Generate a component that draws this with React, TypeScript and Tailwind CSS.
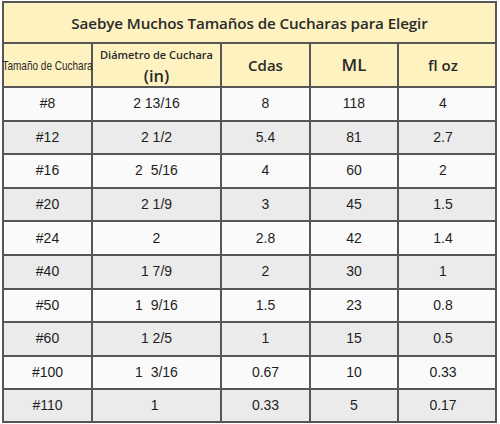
import React from 'react';

const rows: [string, string, string, string, string][] = [
    ['#8', '2 13/16', '8', '118', '4'],
    ['#12', '2 1/2', '5.4', '81', '2.7'],
    ['#16', '2\u00a0 5/16', '4', '60', '2'],
    ['#20', '2 1/9', '3', '45', '1.5'],
    ['#24', '2', '2.8', '42', '1.4'],
    ['#40', '1 7/9', '2', '30', '1'],
    ['#50', '1\u00a0 9/16', '1.5', '23', '0.8'],
    ['#60', '1 2/5', '1', '15', '0.5'],
    ['#100', '1\u00a0 3/16', '0.67', '10', '0.33'],
    ['#110', '1\u00a0', '0.33', '5', '0.17'],
];

const widths = ['w-[89px]', 'w-[129px]', 'w-[89px]', 'w-[88px]', 'w-[88px]'];
const heading = "font-['Open_Sans',sans-serif] font-semibold text-[#2a2a2a]";

export default function App() {
    return (
        <div className="w-[500px] h-[424px] bg-white pl-[2px] pt-[1px]">
            <div className="w-[495px] border-2 border-[#565656]">
                <div className={`h-[41px] flex items-center justify-center bg-[#fdf2c0] border-b-2 border-[#565656] text-[15.2px] tracking-[-0.1px] pt-[1px] ${heading}`}>
                    Saebye Muchos Tamaños de Cucharas para Elegir
                </div>

                <div className="h-[44px] flex bg-[#fdf2c0] border-b-2 border-[#565656]">
                    <div className={`${widths[0]} border-r-2 border-[#565656] flex items-center justify-center`}>
                        <span className="whitespace-nowrap scale-y-[1.3] font-['Liberation_Sans',Arial,sans-serif] text-[10px] text-[#2a2a2a]">
                            Tamaño de Cuchara
                        </span>
                    </div>
                    <div className={`${widths[1]} border-r-2 border-[#565656] flex flex-col items-center justify-center pt-[2px] ${heading}`}>
                        <span className="text-[11px] leading-[17px]">Diámetro de Cuchara</span>
                        <span className="text-[16.5px] leading-[22px] mt-[2px]">(in)</span>
                    </div>
                    <div className={`${widths[2]} border-r-2 border-[#565656] flex items-center justify-center text-[15px] ${heading}`}>
                        Cdas
                    </div>
                    <div className={`${widths[3]} border-r-2 border-[#565656] flex items-center justify-center text-[17px] font-bold ${heading}`}>
                        ML
                    </div>
                    <div className={`${widths[4]} flex items-center justify-center text-[15px] ${heading}`}>
                        fl oz
                    </div>
                </div>

                {rows.map((row, i) => (
                    <div
                        key={row[0]}
                        className={`flex ${i % 2 === 0 ? 'bg-[#fafafa]' : 'bg-[#ebebeb]'} ${i < rows.length - 1 ? 'border-b-2 border-[#565656] h-[33.6px]' : 'h-[31px]'}`}
                    >
                        {row.map((cell, j) => (
                            <div
                                key={j}
                                className={`${widths[j]} ${j < 4 ? 'border-r-2 border-[#565656]' : ''} flex items-center justify-center font-['Liberation_Sans',Arial,sans-serif] text-[14px] text-[#1e1e1e] whitespace-pre`}
                            >
                                {cell}
                            </div>
                        ))}
                    </div>
                ))}
            </div>
        </div>
    );
}
